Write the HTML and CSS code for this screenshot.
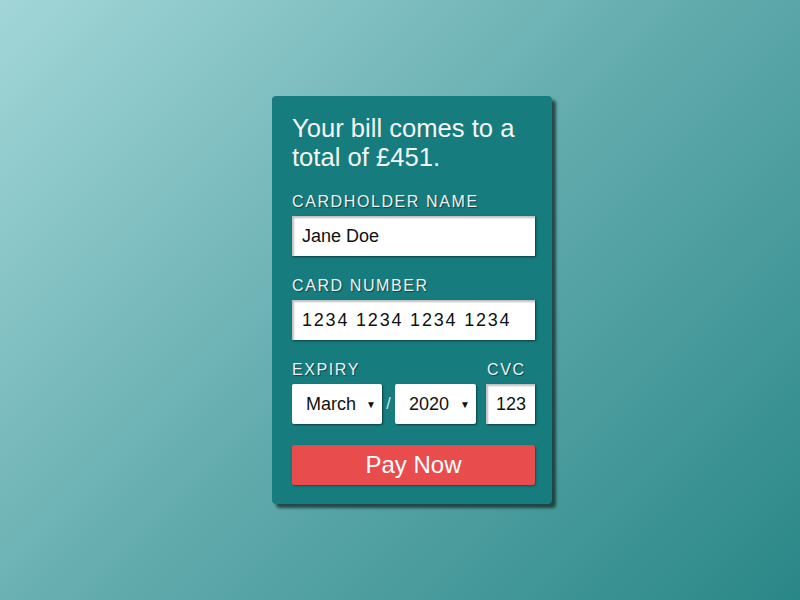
FILE: index.html
```html
<!DOCTYPE html>
<html>
<head>
<meta charset="utf-8">
<link rel="stylesheet" href="styles.css">
</head>
<body>
<div class="card">
  <h1 class="title">Your bill comes to a total of £451.</h1>
  <label class="label">Cardholder name</label>
  <div class="field">Jane Doe</div>
  <label class="label">Card number</label>
  <div class="field number">1234 1234 1234 1234</div>
  <div class="row">
    <div class="expiry">
      <label class="label">Expiry</label>
      <div class="selects">
        <div class="select month"><span>March</span><span class="arrow">▼</span></div>
        <span class="slash">/</span>
        <div class="select year"><span>2020</span><span class="arrow">▼</span></div>
      </div>
    </div>
    <div class="cvc">
      <label class="label">CVC</label>
      <div class="field cvcfield">123</div>
    </div>
  </div>
  <button class="pay">Pay Now</button>
</div>
</body>
</html>
```
FILE: styles.css
```css
html, body { margin: 0; padding: 0; height: 100%; }
body {
  font-family: "Liberation Sans", Arial, sans-serif;
  background: linear-gradient(135deg, #a2d6d8 0%, #62abad 50%, #2a8787 100%);
  display: flex;
  justify-content: center;
  align-items: flex-start;
}
.card {
  margin-top: 96px;
  margin-left: 24px;
  width: 240px;
  padding: 18px 20px 19px 20px;
  background: #167c7e;
  border-radius: 4px;
  box-shadow: 4px 4px 3px rgba(20, 40, 40, 0.75);
}
.title {
  margin: 0 0 20px 0;
  font-size: 25.6px;
  font-weight: normal;
  line-height: 29px;
  color: #f4f6f6;
}
.label {
  display: block;
  font-size: 16px;
  line-height: 20px;
  letter-spacing: 1.6px;
  text-transform: uppercase;
  color: #eef2f2;
  text-shadow: 1px 1px 1px rgba(0,0,0,0.45);
  margin-bottom: 4px;
}
.field {
  box-sizing: border-box;
  height: 40px;
  width: 243px;
  background: #fff;
  font-size: 18px;
  line-height: 40px;
  padding-left: 10px;
  color: #111;
  box-shadow: inset 2px 2px 2px rgba(0,0,0,0.25), 1px 1px 2px rgba(0,0,0,0.5);
  margin-bottom: 20px;
  overflow: hidden;
}
.number { letter-spacing: 1.8px; }
.row { display: flex; justify-content: space-between; width: 243px; }
.selects { display: flex; align-items: center; }
.select {
  box-sizing: border-box;
  height: 40px;
  background: #fff;
  font-size: 18px;
  color: #111;
  display: flex;
  align-items: center;
  justify-content: space-between;
  padding: 0 6px 0 14px;
  border-radius: 2px;
  box-shadow: 1px 1px 2px rgba(0,0,0,0.5);
}
.month { width: 90px; }
.year { width: 81px; }
.arrow { font-size: 10px; }
.slash { color: #cfe6e6; font-size: 16px; width: 13px; text-align: center; }
.cvcfield { width: 49px; padding-left: 10px; margin-bottom: 0; }
.cvc .label { margin-left: 1px; }
.pay {
  display: block;
  margin-top: 21px;
  width: 243px;
  height: 40px;
  border: none;
  border-radius: 2px;
  background: #e84c4c;
  color: #fff;
  font-family: "Liberation Sans", Arial, sans-serif;
  font-size: 24px;
  box-shadow: 1px 1px 2px rgba(0,0,0,0.35);
  padding: 0;
}
```
